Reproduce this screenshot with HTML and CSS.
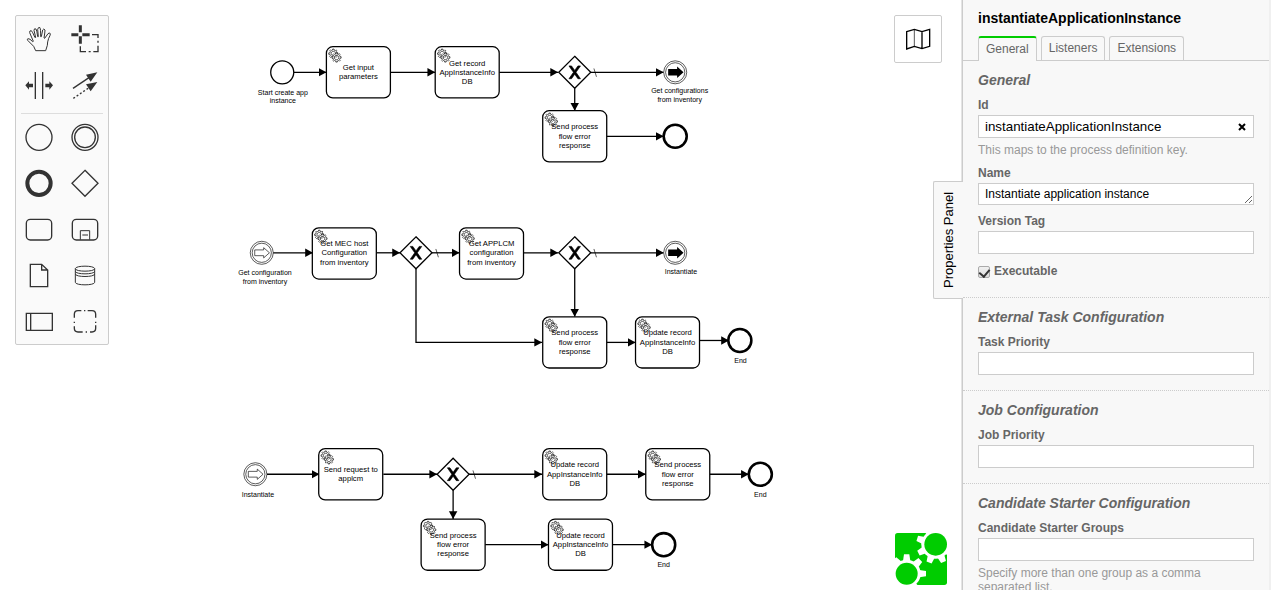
FILE: index.html
```html
<!DOCTYPE html>
<html lang="en">
<head>
<meta charset="utf-8">
<title>instantiateApplicationInstance</title>
<link rel="stylesheet" href="styles.css">
</head>
<body>
<div class="modeler">
  <main class="canvas">
    <svg class="diagram" role="img" aria-label="Process diagram">
      <defs>
        <marker id="arrow" viewBox="0 0 20 20" refX="11" refY="10" markerWidth="11" markerHeight="11" orient="auto"><path d="M0 4L11 10L0 16Z"/></marker>
        <path id="gear" d="m0,0 v-1.71c.35-.07.7-.18 1.05-.32.34-.15.66-.32.97-.52l1.19 1.18 1.57-1.58-1.2-1.18c.4-.61.68-1.3.83-2.02l1.62-.01v-2.22l-1.64.01c-.07-.35-.18-.7-.32-1.04-.15-.34-.32-.66-.52-.96l1.13-1.14-1.58-1.56-1.13 1.13c-.61-.4-1.3-.68-2.02-.82l.01-1.62h-2.24v1.63c-.35.07-.7.18-1.05.32-.34.15-.66.32-.96.52l-1.17-1.16-1.57 1.58 1.17 1.16c-.4.61-.68 1.3-.82 2.02h-1.66v2.22h1.67c.07.35.18.7.32 1.04.15.35.32.67.53.96l-1.2 1.2 1.58 1.56 1.2-1.19c.61.4 1.3.68 2.02.82v1.7z m.22-4c-1.79.75-3.86-.09-4.61-1.87-.75-1.78.09-3.85 1.88-4.6 1.79-.75 3.86.09 4.61 1.87.75 1.78-.09 3.85-1.88 4.6z"/>
        <g id="task">
          <rect class="shape" width="100" height="80" rx="10"/>
          <use href="#gear" class="gear" x="12" y="18"/>
          <use href="#gear" class="gear" x="17" y="24"/>
        </g>
        <g id="gateway">
          <path class="shape" d="M0-25L25 0L0 25L-25 0Z"/>
          <path class="cross" d="M-9-10H-5L0-3L5-10H9L2 0L9 10H5L0 3L-5 10H-9L-2 0Z"/>
        </g>
        <circle id="start" class="shape" r="18"/>
        <circle id="end" class="shape end" r="18"/>
        <g id="catch">
          <circle class="ring" r="18"/><circle class="ring" r="15"/>
          <path class="ring" d="M-11-4.500H3V-8L12 0L3 8V4.500H-11Z"/>
        </g>
        <g id="throw">
          <circle class="ring" r="18"/><circle class="ring" r="15"/>
          <path d="M-11-5H3V-9L13 0L3 9V5H-11Z"/>
        </g>
      </defs>
      <g transform="scale(0.64)">
        <g class="flows">
          <path d="M459 113H510"/><path d="M610 113H680"/><path d="M780 113H872"/><path d="M923 113H1037"/><path d="M898 138V173"/><path d="M948 213H1037"/>
          <path d="M426 395H489"/><path d="M589 395H625"/><path d="M675 395H718"/><path d="M818 395H872"/><path d="M923 395H1037"/><path d="M898 420V495"/><path d="M650 420V535H847"/><path d="M948 535H993"/><path d="M1093 532H1139"/>
          <path d="M417 741H499"/><path d="M599 741H683"/><path d="M733 741H847"/><path d="M708 766V811"/><path d="M948 741H1009"/><path d="M1109 741H1170"/><path d="M758 851H857"/><path d="M957 851H1019"/>
        </g>
        <path class="slash" d="M928 107L932 120M681 389L685 402M928 389L932 402M739 735L743 748"/>

        <use href="#start" x="441" y="113"/>
        <use href="#gateway" x="898" y="113"/>
        <use href="#throw" x="1055" y="113"/>
        <use href="#end" x="1055" y="213"/>
        <use href="#catch" x="409" y="395"/>
        <use href="#gateway" x="650" y="395"/>
        <use href="#gateway" x="898" y="395"/>
        <use href="#throw" x="1055" y="395"/>
        <use href="#end" x="1156" y="532"/>
        <use href="#catch" x="399" y="741"/>
        <use href="#gateway" x="708" y="741"/>
        <use href="#end" x="1188" y="741"/>
        <use href="#end" x="1037" y="851"/>

        <g class="label">
          <text x="442" y="149">Start create app</text><text x="442" y="161">instance</text>
          <text x="1062" y="145">Get configurations</text><text x="1062" y="159">from inventory</text>
          <text x="414" y="429">Get configuration</text><text x="414" y="443">from inventory</text>
          <text x="1064" y="428">Instantiate</text>
          <text x="1157" y="567">End</text>
          <text x="403" y="777">Instantiate</text>
          <text x="1188" y="777">End</text>
          <text x="1037" y="886">End</text>
        </g>

        <g class="task" transform="translate(510 73)"><use href="#task"/><text x="50" y="36">Get input</text><text x="50" y="50">parameters</text></g>
        <g class="task" transform="translate(680 73)"><use href="#task"/><text x="50" y="30">Get record</text><text x="50" y="44">AppInstanceInfo</text><text x="50" y="58">DB</text></g>
        <g class="task" transform="translate(848 173)"><use href="#task"/><text x="50" y="29">Send process</text><text x="50" y="44">flow error</text><text x="50" y="58">response</text></g>
        <g class="task" transform="translate(488 356)"><use href="#task"/><text x="50" y="29">Get MEC host</text><text x="50" y="43">Configuration</text><text x="50" y="58">from inventory</text></g>
        <g class="task" transform="translate(718 356)"><use href="#task"/><text x="50" y="29">Get APPLCM</text><text x="50" y="43">configuration</text><text x="50" y="58">from inventory</text></g>
        <g class="task" transform="translate(848 495)"><use href="#task"/><text x="50" y="29">Send process</text><text x="50" y="44">flow error</text><text x="50" y="58">response</text></g>
        <g class="task" transform="translate(993 495)"><use href="#task"/><text x="50" y="29">Update record</text><text x="50" y="44">AppInstanceInfo</text><text x="50" y="58">DB</text></g>
        <g class="task" transform="translate(498 701)"><use href="#task"/><text x="50" y="36">Send request to</text><text x="50" y="50">applcm</text></g>
        <g class="task" transform="translate(848 701)"><use href="#task"/><text x="50" y="29">Update record</text><text x="50" y="44">AppInstanceInfo</text><text x="50" y="58">DB</text></g>
        <g class="task" transform="translate(1009 701)"><use href="#task"/><text x="50" y="29">Send process</text><text x="50" y="44">flow error</text><text x="50" y="58">response</text></g>
        <g class="task" transform="translate(658 811)"><use href="#task"/><text x="50" y="29">Send process</text><text x="50" y="44">flow error</text><text x="50" y="58">response</text></g>
        <g class="task" transform="translate(857 811)"><use href="#task"/><text x="50" y="29">Update record</text><text x="50" y="44">AppInstanceInfo</text><text x="50" y="58">DB</text></g>
      </g>
    </svg>

    <div class="palette">
      <div class="tools">
        <button class="tool" aria-label="Hand tool"><svg viewBox="18 18 138 138"><path class="thin" d="M77 122L71 109L53 91Q50 87 54 86Q59 85 68 95L70 94L59 68Q58 61 64 62Q67 64 75 83L77 82L72 61Q72 54 78 57Q81 62 83 80L85 80L83 58Q85 50 90 53Q92 56 92 80L94 80L98 60Q101 54 105 60Q105 66 102 84L104 85L114 71Q120 66 121 72Q121 76 116 85Q112 96 112 106L107 122Z"/></svg></button>
        <button class="tool" aria-label="Lasso tool"><svg viewBox="156 18 138 138"><path class="thick" d="M211 46V67M211 79V101M184 74H205M217 74H239"/><path d="M246 74H264V84M264 92V98M264 107V125H250M242 125H236M228 125H211V109"/></svg></button>
        <button class="tool" aria-label="Create or remove space"><svg viewBox="18 156 138 138"><path d="M76 186V267M98 186V267"/><path class="solid" d="M46 226L57 214V221H69V232H57V239ZM129 226L118 214V221H106V232H118V239Z"/></svg></button>
        <button class="tool" aria-label="Global connect"><svg viewBox="156 156 138 138"><path d="M189 235L237 203"/><path class="dash" d="M190 265L237 233"/><path class="solid" d="M262 187L242 215L228 194ZM262 216L242 244L228 223Z"/></svg></button>
      </div>
      <hr class="divider">
      <div class="tools">
        <button class="tool" aria-label="Create start event"><svg viewBox="18 312 138 138"><circle cx="87" cy="382" r="39"/></svg></button>
        <button class="tool" aria-label="Create intermediate event"><svg viewBox="156 312 138 138"><circle cx="225" cy="382" r="39"/><circle cx="225" cy="382" r="31"/></svg></button>
        <button class="tool" aria-label="Create end event"><svg viewBox="18 -15 138 138"><circle class="heavy" cx="87" cy="55" r="35"/></svg></button>
        <button class="tool" aria-label="Create gateway"><svg viewBox="156 -15 138 138"><path d="M225 16L264 55L225 94L186 55Z"/></svg></button>
        <button class="tool" aria-label="Create task"><svg viewBox="18 123 138 138"><rect x="49" y="163" width="76" height="62" rx="12"/></svg></button>
        <button class="tool" aria-label="Create expanded sub-process"><svg viewBox="156 123 138 138"><rect x="187" y="163" width="76" height="62" rx="12"/><path class="thin" d="M211 224V197H239V224M217 210H234"/></svg></button>
        <button class="tool" aria-label="Create data object"><svg viewBox="18 261 138 138"><path d="M61 298H95L113 315V365H61ZM95 298V315H113"/></svg></button>
        <button class="tool" aria-label="Create data store"><svg viewBox="156 261 138 138"><path class="thin" d="M196 311V352C196 362 254 362 254 352V311M196 311C196 301 254 301 254 311C254 321 196 321 196 311M196 319C196 329 254 329 254 319M196 327C196 337 254 337 254 327"/></svg></button>
        <button class="tool" aria-label="Create pool"><svg viewBox="18 399 138 138"><path d="M49 445H127V496H49ZM62 445V496"/></svg></button>
        <button class="tool" aria-label="Create group"><svg viewBox="156 399 138 138"><path d="M193 458V448Q193 437 204 437H214M222 437H226M233 437H246Q257 437 257 448V458M257 470V474M257 481V490Q257 501 246 501H240M231 501H227M218 501H204Q193 501 193 490V484M193 474V470"/></svg></button>
      </div>
    </div>

    <button class="minimap" aria-label="Open minimap"><svg viewBox="45 48 138 138"><path d="M80 95L103 88L126 95L149 88V139L126 146L103 139L80 147ZM126 95V146"/><path class="fold" d="M103 88V139"/></svg></button>

    <a class="logo" href="#" aria-label="Powered by">
      <svg viewBox="30 24 156 156">
        <defs><path id="tooth" d="M38-11L58-8V8L38 11Z"/></defs>
        <rect class="green" x="30" y="24" width="156" height="156" rx="8"/>
        <g transform="translate(152 58)"><circle r="43"/><path d="M0 0L-32-36H40V38Z"/><use href="#tooth" transform="rotate(198)"/><use href="#tooth" transform="rotate(153)"/><use href="#tooth" transform="rotate(110)"/><use href="#tooth" transform="rotate(66)"/><circle class="green" r="34"/></g>
        <g transform="translate(65 146)"><circle r="42"/><path d="M0 0L-40-36V40H38Z"/><use href="#tooth" transform="rotate(230)"/><use href="#tooth" transform="rotate(270)"/><use href="#tooth" transform="rotate(315)"/><use href="#tooth"/><circle class="green" r="33"/></g>
      </svg>
    </a>
    <button class="toggle">Properties Panel</button>
  </main>

  <aside class="panel">
    <h1 class="title">instantiateApplicationInstance</h1>
    <nav class="tabs">
      <a class="tab active" href="#">General</a>
      <a class="tab" href="#">Listeners</a>
      <a class="tab" href="#">Extensions</a>
    </nav>
    <section class="group">
      <h2 class="heading">General</h2>
      <div class="field">
        <label for="id">Id</label>
        <div class="clearable"><input class="box" id="id" type="text" value="instantiateApplicationInstance"><button class="clear" aria-label="Clear"><svg viewBox="0 0 8 8"><path d="M1 1L7 7M7 1L1 7"/></svg></button></div>
        <p class="hint">This maps to the process definition key.</p>
      </div>
      <div class="field"><label for="name">Name</label><textarea class="box area" id="name" rows="1">Instantiate application instance</textarea></div>
      <div class="field"><label for="version">Version Tag</label><input class="box" id="version" type="text"></div>
      <div class="check"><input class="tick" id="executable" type="checkbox" checked><label for="executable">Executable</label></div>
    </section>
    <section class="group">
      <h2 class="heading">External Task Configuration</h2>
      <div class="field"><label for="task-priority">Task Priority</label><input class="box" id="task-priority" type="text"></div>
    </section>
    <section class="group">
      <h2 class="heading">Job Configuration</h2>
      <div class="field"><label for="job-priority">Job Priority</label><input class="box" id="job-priority" type="text"></div>
    </section>
    <section class="group">
      <h2 class="heading">Candidate Starter Configuration</h2>
      <div class="field"><label for="groups">Candidate Starter Groups</label><input class="box" id="groups" type="text"><p class="hint">Specify more than one group as a comma separated list.</p></div>
    </section>
  </aside>
</div>
</body>
</html>
```
FILE: styles.css
```css
* { box-sizing: border-box; }

body {
  margin: 0;
  font: 12px/14px Arial, "Liberation Sans", sans-serif;
  background: #fff;
  color: #000;
}

button { padding: 0; font: inherit; color: inherit; cursor: pointer; }

.modeler { display: flex; height: 100vh; overflow: hidden; }

/* Canvas */
.canvas { position: relative; flex: 1; min-width: 0; }
.diagram { display: block; width: 100%; height: 100%; }
.shape { fill: #fff; stroke: #000; stroke-width: 2; }
.end { stroke-width: 4; }
.ring { fill: #fff; stroke: #000; stroke-width: 1; }
.gear { fill: #fff; stroke: #000; stroke-width: 1; }
.cross { stroke: #000; stroke-width: 1; }
.flows path { fill: none; stroke: #000; stroke-width: 2; marker-end: url(#arrow); }
.slash { stroke: #000; stroke-width: 1; }
.diagram text { text-anchor: middle; }
.label { font-size: 11px; }
.task { font-size: 12px; }

/* Palette */
.palette {
  position: absolute;
  top: 15px;
  left: 15px;
  background: #fafafa;
  border: 1px solid #ccc;
  border-radius: 2px;
}
.tools { display: grid; grid-template-columns: 46px 46px; }
.tool { height: 46px; border: 0; background: none; }
.tool svg { display: block; fill: none; stroke: #333; stroke-width: 4; }
.tool .thin { stroke-width: 3; }
.tool .thick { stroke-width: 9; }
.tool .heavy { stroke-width: 12; }
.tool .dash { stroke-dasharray: 6 6; }
.tool .solid { fill: #333; stroke: none; }
.divider { margin: 5px 5px 0; border: 0; border-top: 1px solid #ddd; }

.minimap {
  position: absolute;
  top: 15px;
  right: 20px;
  width: 48px;
  height: 48px;
  background: #fff;
  border: 1px solid #ccc;
  border-radius: 2px;
}
.minimap svg { display: block; fill: none; stroke: #000; stroke-width: 4; }
.minimap .fold { stroke-width: 2; }

.logo { position: absolute; right: 15px; bottom: 5px; width: 52px; }
.logo svg { display: block; fill: #fff; }
.logo .green { fill: #00cc00; }

.toggle {
  position: absolute;
  z-index: 1;
  top: 181px;
  right: -1px;
  width: 30px;
  height: 118px;
  writing-mode: vertical-rl;
  transform: rotate(180deg);
  font-size: 13px;
  line-height: 28px;
  background: #f8f8f8;
  border: 1px solid #ccc;
  border-left: 0;
  border-radius: 0 2px 2px 0;
}

/* Properties panel */
.panel {
  position: relative;
  flex: 0 0 309px;
  overflow: hidden;
  background: #f8f8f8;
  border-left: 1px solid #ccc;
  border-right: 2px solid #f0f0f0;
  box-shadow: -1px 0 0 #e4e4e4;
}
.title { margin: 9px 15px; font-size: 14px; line-height: 18px; }
.tabs {
  display: flex;
  align-items: flex-end;
  gap: 4px;
  padding: 0 15px;
  border-bottom: 1px solid #ccc;
}
.tab {
  padding: 4px 7px;
  line-height: 15px;
  color: #666;
  text-decoration: none;
  border: 1px solid #ccc;
  border-bottom: 0;
  border-radius: 3px 3px 0 0;
}
.active {
  margin-bottom: -1px;
  border-top: 2px solid #00cc00;
  background: #f8f8f8;
}
.group { padding: 10px 15px 15px; }
.group + .group { border-top: 1px dotted #ccc; }
.heading {
  margin: 0 0 8px;
  font-size: 14px;
  font-style: italic;
  line-height: 19px;
  color: #666;
}
.field + .field { margin-top: 9px; }
label { display: block; font-weight: bold; color: #666; }
.box {
  display: block;
  width: 100%;
  height: 23px;
  margin: 3px 0 0;
  padding: 2px 6px;
  font-family: Arial, "Liberation Sans", sans-serif;
  line-height: 17px;
  color: #000;
  background: #fff;
  border: 1px solid #ccc;
  border-radius: 0;
}
.area { height: 22px; font-size: 12px; resize: vertical; overflow: hidden; }
.clearable { position: relative; }
.clear {
  position: absolute;
  top: 8px;
  right: 8px;
  width: 8px;
  height: 8px;
  border: 0;
  background: none;
}
.clear svg { display: block; fill: none; stroke: #000; stroke-width: 2; }
.hint { margin: 5px 0 0; color: #999; }
.check { display: flex; gap: 4px; min-height: 18px; margin-top: 10px; }
.tick {
  display: grid;
  place-items: center;
  width: 12px;
  height: 12px;
  margin: 2px 0 0;
  appearance: none;
  border: 1px solid #aaa;
  border-radius: 2px;
  background: linear-gradient(#f0f0f0, #ddd);
}
.tick:checked::before {
  content: "";
  width: 5px;
  height: 8px;
  margin-bottom: 2px;
  border: solid #333;
  border-width: 0 2px 2px 0;
  transform: rotate(40deg);
}
```
